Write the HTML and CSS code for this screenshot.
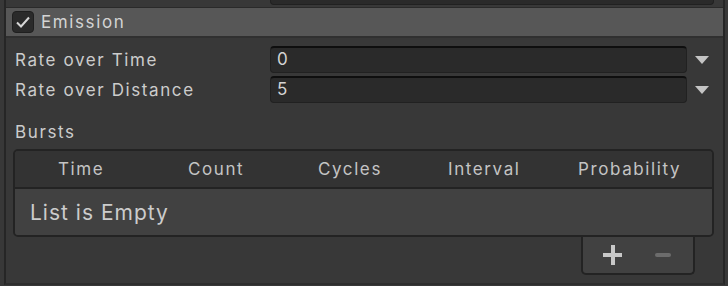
FILE: index.html
```html
<!DOCTYPE html>
<html lang="en">
<head>
  <meta charset="UTF-8">
  <title>Emission module</title>
  <link rel="stylesheet" href="styles.css">
</head>
<body>
  <div class="inspector">
    <!-- bottom of the field from the previous module -->
    <div class="prev-row">
      <div class="prev-field"></div>
    </div>

    <!-- module header -->
    <div class="module-header">
      <span class="toggle">
        <svg width="16" height="14" viewBox="0 0 16 14">
          <path d="M2 7.5 L6 11.5 L14 2.5" fill="none" stroke="#d6d6d6" stroke-width="2"/>
        </svg>
      </span>
      <span class="module-title">Emission</span>
    </div>

    <div class="module-body">
      <div class="prop-row">
        <label class="prop-label">Rate over Time</label>
        <div class="field">0</div>
        <span class="dropdown"></span>
      </div>
      <div class="prop-row">
        <label class="prop-label">Rate over Distance</label>
        <div class="field">5</div>
        <span class="dropdown"></span>
      </div>

      <div class="section-label">Bursts</div>

      <div class="list">
        <div class="list-head">
          <span>Time</span>
          <span>Count</span>
          <span>Cycles</span>
          <span>Interval</span>
          <span>Probability</span>
        </div>
        <div class="list-body">List is Empty</div>
      </div>

      <div class="list-footer">
        <div class="footer-tab">
          <span class="btn-plus"></span>
          <span class="btn-minus"></span>
        </div>
      </div>
    </div>
  </div>
</body>
</html>
```

FILE: styles.css
```css
body {
  margin: 0;
  background-color: #383838;
  font-family: Inter, "Noto Sans", sans-serif;
  color: #cccccc;
  letter-spacing: 1.6px;
}
.inspector {
  margin-left: 4px;
  width: 717px;
  height: 283px;
  border-left: 2px solid #262626;
  border-right: 2px solid #262626;
  border-bottom: 2px solid #2e2e2e;
}
.prev-row {
  height: 7px;
  padding-left: 264px;
}
.prev-field {
  width: 442px;
  height: 4px;
  background-color: #2a2a2a;
  border: 1px solid #212121;
  border-top: none;
  border-radius: 0 0 4px 4px;
}
.module-header {
  height: 28px;
  display: flex;
  align-items: center;
  background-color: #575757;
  border-top: 1px solid #2a2a2a;
  border-bottom: 2px solid #303030;
  padding-left: 6px;
}
.toggle {
  width: 22px;
  height: 22px;
  box-sizing: border-box;
  border-radius: 4px;
  background-color: #2a2a2a;
  border: 1px solid #1f1f1f;
  display: flex;
  align-items: center;
  justify-content: center;
}
.module-title {
  margin-left: 7px;
  font-size: 17px;
  color: #d4d4d4;
}
.module-body {
  padding: 8px 0 0 9px;
}
.prop-row {
  height: 27px;
  margin-bottom: 3px;
  display: flex;
  align-items: center;
}
.prop-label {
  width: 255px;
  font-size: 17px;
}
.field {
  width: 417px;
  height: 27px;
  box-sizing: border-box;
  background-color: #2a2a2a;
  border: 1px solid #212121;
  border-top: 2px solid #0e0e0e;
  border-radius: 4px;
  padding-left: 6px;
  font-size: 17px;
  line-height: 23px;
  color: #d4d4d4;
}
.dropdown {
  margin-left: 8px;
  width: 0;
  height: 0;
  border-left: 7px solid transparent;
  border-right: 7px solid transparent;
  border-top: 8px solid #c4c4c4;
}
.section-label {
  margin-top: 16px;
  height: 30px;
  font-size: 17px;
  line-height: 26px;
}
.list {
  margin-left: -2px;
  width: 697px;
  border: 2px solid #232323;
  border-radius: 5px;
  overflow: hidden;
}
.list-head {
  height: 36px;
  display: grid;
  grid-template-columns: repeat(4, 130px) 1fr;
  align-items: center;
  padding-left: 43px;
  background-color: #333333;
  border-bottom: 2px solid #232323;
  font-size: 17px;
  color: #c4c4c4;
}
.list-body {
  height: 46px;
  background-color: #414141;
  padding-left: 15px;
  font-size: 21px;
  line-height: 48px;
  letter-spacing: 1px;
  color: #cccccc;
}
.list-footer {
  display: flex;
  padding-left: 566px;
}
.footer-tab {
  width: 114px;
  height: 38px;
  background-color: #414141;
  border: 2px solid #232323;
  border-top: none;
  border-radius: 0 0 5px 5px;
  display: flex;
  align-items: center;
  gap: 33px;
  padding-left: 20px;
  box-sizing: border-box;
}
.btn-plus {
  width: 19px;
  height: 20px;
  background:
    linear-gradient(#c8c8c8, #c8c8c8) center / 19px 4px no-repeat,
    linear-gradient(#c8c8c8, #c8c8c8) center / 4px 20px no-repeat;
  border-radius: 2px;
}
.btn-minus {
  width: 16px;
  height: 4px;
  border-radius: 2px;
  background-color: #6c6c6c;
}
```
